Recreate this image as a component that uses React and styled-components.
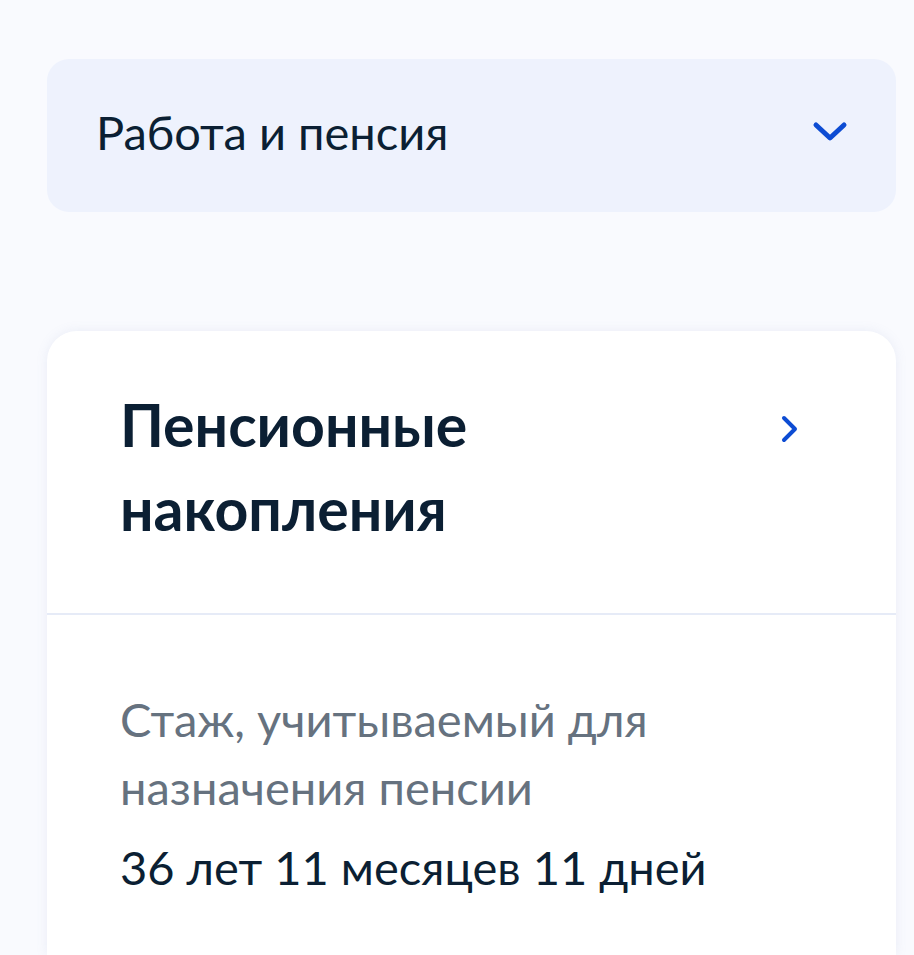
import React from "react";
import styled, { createGlobalStyle } from "styled-components";

const Global = createGlobalStyle`
  html, body { margin: 0; padding: 0; background: #f9fafe; }
  body { font-family: Lato, "Noto Sans", sans-serif; }
`;

const Page = styled.div`
  padding: 59px 18px 0 47px;
  height: 955px;
  box-sizing: border-box;
  overflow: hidden;
  display: flex;
  flex-direction: column;
  gap: 119px;
`;

const Dropdown = styled.div`
  height: 153px;
  box-sizing: border-box;
  background: #eef2fd;
  border-radius: 22px;
  display: flex;
  align-items: center;
  justify-content: space-between;
  padding: 0 48px 8px 49px;
`;

const DropdownLabel = styled.span`
  font-size: 47px;
  color: #0b1f33;
`;

const Card = styled.div`
  background: #ffffff;
  border-radius: 30px 30px 0 0;
  box-shadow: 0 0 12px rgba(120, 140, 190, 0.12);
  flex: 1;
`;

const CardHeader = styled.div`
  display: flex;
  justify-content: space-between;
  align-items: flex-start;
  padding: 52px 96px 62px 73px;
  border-bottom: 2px solid #e6ebf7;
`;

const Title = styled.h2`
  margin: 0;
  font-size: 59px;
  font-weight: 700;
  line-height: 84px;
  color: #0b1f33;
`;

const ChevronBox = styled.div`
  padding-top: 32px;
  display: flex;
`;

const CardBody = styled.div`
  padding: 70px 73px 0 73px;
`;

const Label = styled.div`
  font-size: 47px;
  line-height: 68px;
  color: #66727f;
`;

const Value = styled.div`
  font-size: 47px;
  line-height: 68px;
  margin-top: 12px;
  color: #0b1f33;
`;

const ChevronDown = () => (
  <svg width="36" height="22" viewBox="0 0 36 22" fill="none">
    <path d="M4 4 L18 17 L32 4" stroke="#0d4cd3" strokeWidth="5" strokeLinecap="round" strokeLinejoin="round" />
  </svg>
);

const ChevronRight = () => (
  <svg width="20" height="28" viewBox="0 0 20 28" fill="none">
    <path d="M4 3 L15 14 L4 25" stroke="#0d4cd3" strokeWidth="4" strokeLinecap="round" strokeLinejoin="round" />
  </svg>
);

export default function App() {
  return (
    <>
      <Global />
      <Page>
        <Dropdown>
          <DropdownLabel>Работа и пенсия</DropdownLabel>
          <ChevronDown />
        </Dropdown>
        <Card>
          <CardHeader>
            <Title>
              Пенсионные
              <br />
              накопления
            </Title>
            <ChevronBox>
              <ChevronRight />
            </ChevronBox>
          </CardHeader>
          <CardBody>
            <Label>
              Стаж, учитываемый для
              <br />
              назначения пенсии
            </Label>
            <Value>36 лет 11 месяцев 11 дней</Value>
          </CardBody>
        </Card>
      </Page>
    </>
  );
}
